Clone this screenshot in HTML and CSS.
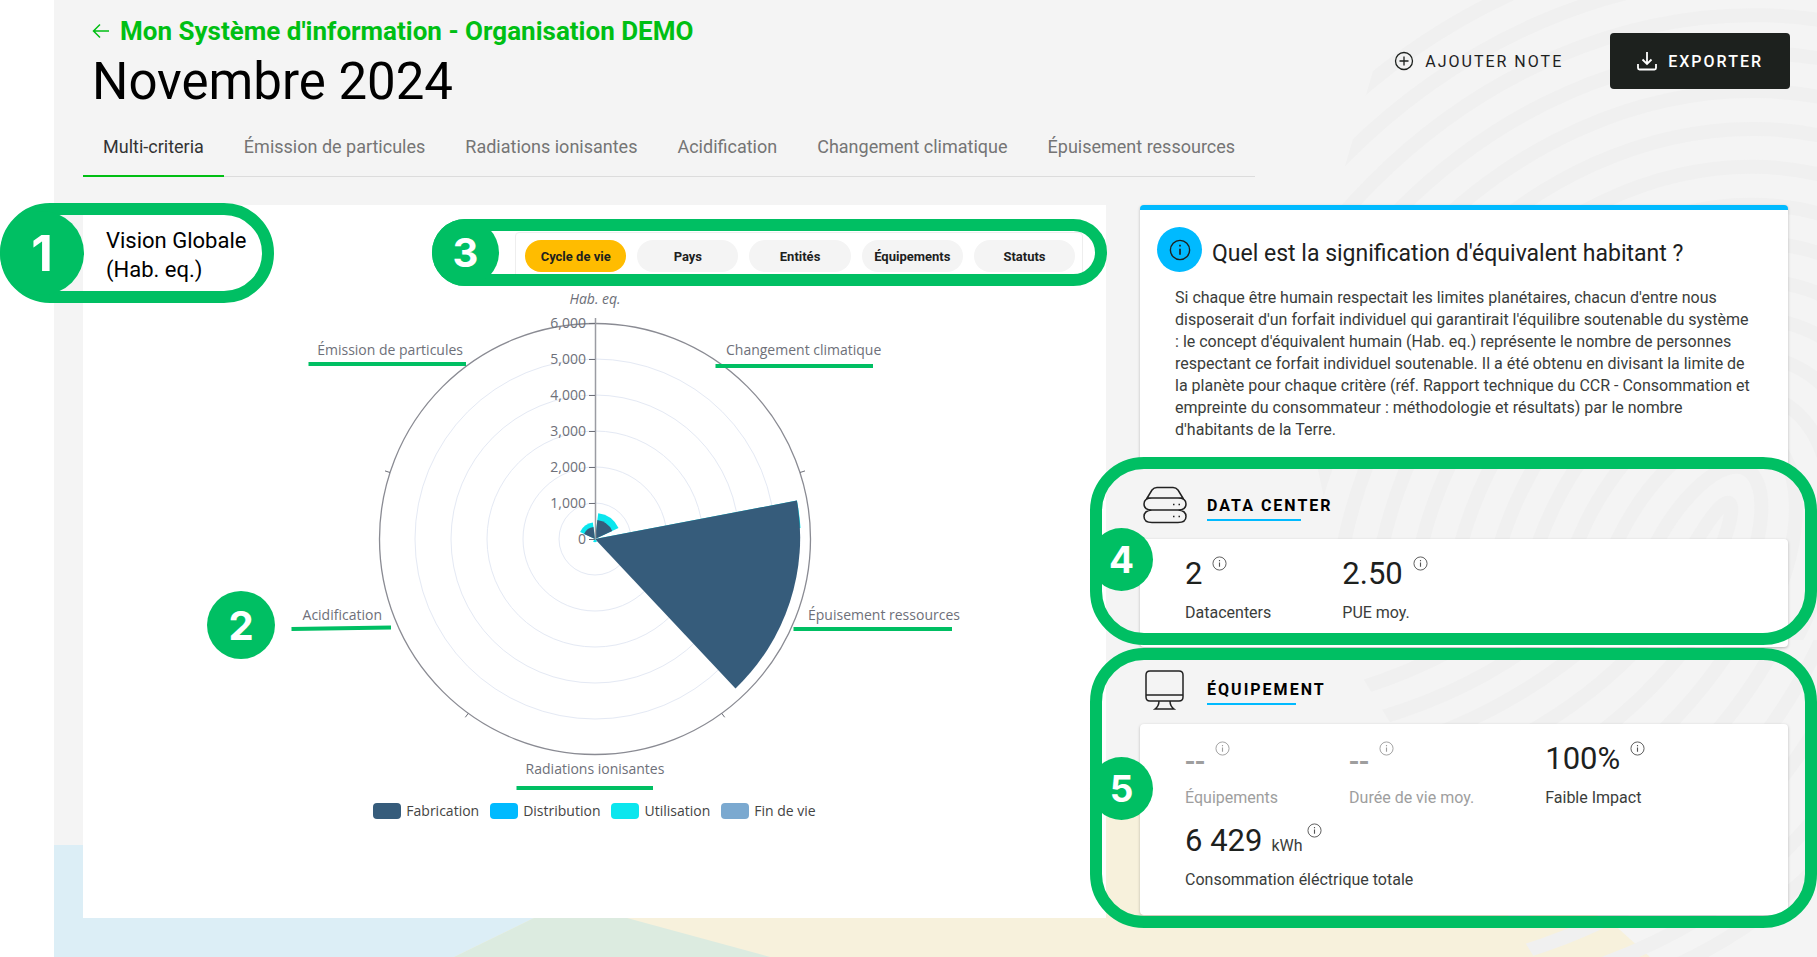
FILE: index.html
```html
<!DOCTYPE html>
<html lang="fr">
<head>
<meta charset="utf-8">
<title>Mon Système d'information - Novembre 2024</title>
<link rel="stylesheet" href="styles.css">
</head>
<body>
<svg class="defs" aria-hidden="true">
  <symbol id="info" viewBox="0 0 16 16"><circle cx="8" cy="8" r="7" fill="none" stroke="currentColor" stroke-width="1"/><path d="M8 7v4.500M8 4.200v1.300" stroke="currentColor" stroke-width="1.200" fill="none"/></symbol>
</svg>
<div class="app">
  <svg class="backdrop" viewBox="0 0 1763 957" preserveAspectRatio="xMaxYMin slice" aria-hidden="true">
    <defs>
      <clipPath id="print"><path d="M1340 0H1763V640H1300L1262 460L1281 200Z"/></clipPath>
      <clipPath id="print-low"><path d="M1300 640H1763V957H1480L1310 680Z"/></clipPath>
    </defs>
    <path d="M0 845H306L573 918L716 957H0Z" fill="#dceef6"/>
    <path d="M400 957L480 918L690 817L1100 806L1546 912L1596 957Z" fill="#f7f1dc"/>
    <path d="M400 957L480 918H573L716 957Z" fill="#dcebe0"/>
    <g clip-path="url(#print)"><g class="rings" transform="translate(1640 575) rotate(26)">
      <ellipse rx="14" ry="80"/><ellipse rx="48" ry="118"/><ellipse rx="84" ry="156"/><ellipse rx="120" ry="194"/><ellipse rx="156" ry="232"/><ellipse rx="192" ry="270"/><ellipse rx="230" ry="308"/><ellipse rx="268" ry="346"/><ellipse rx="306" ry="384"/><ellipse rx="344" ry="422"/><ellipse rx="382" ry="460"/><ellipse rx="420" ry="498"/><ellipse rx="458" ry="536"/><ellipse rx="496" ry="574"/><ellipse rx="534" ry="612"/><ellipse rx="572" ry="650"/>
    </g></g>
    <g clip-path="url(#print-low)"><path class="rings" d="M1300 690Q1400 660 1470 600M1300 725Q1440 690 1530 600M1320 755Q1480 710 1580 600M1340 785Q1520 740 1625 600M1360 820Q1560 770 1665 600M1380 855Q1600 800 1705 600M1400 890Q1640 830 1745 600M1420 925Q1680 860 1785 600M1440 960Q1710 890 1810 630M1480 985Q1740 920 1830 700M1560 990Q1740 930 1830 780"/></g>
  </svg>

  <header class="header">
    <div class="heading">
      <a class="back" href="#"><svg viewBox="0 0 18 16" aria-hidden="true"><path d="M17 8H1.500M8 1.500L1.500 8L8 14.500"/></svg><span>Mon Système d'information - Organisation DEMO</span></a>
      <h1>Novembre 2024</h1>
    </div>
    <div class="actions">
      <button class="btn"><svg viewBox="0 0 20 20" aria-hidden="true"><circle cx="10" cy="10" r="8.500"/><path d="M10 5.500v9M5.500 10h9"/></svg>AJOUTER NOTE</button>
      <button class="btn btn-dark"><svg viewBox="0 0 20 20" aria-hidden="true"><path d="M10 1v12M5.500 8.500L10 13l4.500-4.500M1 13v4q0 1.500 1.500 1.500h15q1.500 0 1.500-1.500v-4"/></svg>EXPORTER</button>
    </div>
  </header>

  <nav class="tabs">
    <a class="tab active" href="#">Multi-criteria</a>
    <a class="tab" href="#">Émission de particules</a>
    <a class="tab" href="#">Radiations ionisantes</a>
    <a class="tab" href="#">Acidification</a>
    <a class="tab" href="#">Changement climatique</a>
    <a class="tab" href="#">Épuisement ressources</a>
  </nav>

  <main class="content">
    <section class="chart-card">
      <div class="chart-top">
        <h2 class="chart-title">Vision Globale<br>(Hab. eq.)</h2>
        <div class="pills">
          <button class="pill selected">Cycle de vie</button>
          <button class="pill">Pays</button>
          <button class="pill">Entités</button>
          <button class="pill">Équipements</button>
          <button class="pill">Statuts</button>
        </div>
      </div>
      <svg class="chart" viewBox="0 0 740 522" role="img" aria-label="Impacts par critère">
        <g class="grid-rings"><circle cx="370" cy="258" r="36"/><circle cx="370" cy="258" r="72"/><circle cx="370" cy="258" r="108"/><circle cx="370" cy="258" r="144"/><circle cx="370" cy="258" r="180"/></g>
        <circle class="outer" cx="370" cy="258" r="215.500"/>
        <path class="axis" d="M575 191.500l5-1.600M496.700 432.300l3 4M243.300 432.300l-3 4M165 191.500l-5-1.600"/>
        <path fill="#0be6ee" d="M370 258L571.900 219.500A206 206 0 0 1 575.500 247Z"/>
        <path fill="#365c7b" d="M370 258L571.900 219.500A209 209 0 0 1 510.500 407.500Z"/>
        <path fill="#0be6ee" d="M370 258L373.200 232.200A26 26 0 0 1 393.500 246.900Z"/>
        <path fill="#365c7b" d="M370 258L372.400 239.100A19 19 0 0 1 387.200 249.900Z"/>
        <path fill="#0be6ee" d="M370 258L355.100 251A16.500 16.500 0 0 1 367.900 241.600Z"/>
        <path fill="#365c7b" d="M370 258L359.100 252.900A12 12 0 0 1 368.500 246.100Z"/>
        <path fill="#0be6ee" d="M370 258l2 2.500q-2 1.500-4 0Z"/>
        <path class="axis-main" d="M370.500 37V258"/>
        <path class="axis" d="M364 42.500h6M364 78.500h6M364 114.500h6M364 150.500h6M364 186.500h6M364 222.500h6M364 258.500h6"/>
        <g class="label end">
          <text x="361" y="47">6,000</text><text x="361" y="83">5,000</text><text x="361" y="119">4,000</text><text x="361" y="155">3,000</text><text x="361" y="191">2,000</text><text x="361" y="227">1,000</text><text x="361" y="263">0</text>
          <text x="238" y="74">Émission de particules</text>
          <text x="157" y="339">Acidification</text>
        </g>
        <g class="label mid"><text class="unit" x="370" y="23">Hab. eq.</text><text x="370" y="493">Radiations ionisantes</text></g>
        <g class="label"><text x="501" y="74">Changement climatique</text><text x="583" y="339">Épuisement ressources</text></g>
        <path class="marks" d="M83.500 83H241M490.500 85H648M568.500 348H727M66.500 348L166 346.500M291.500 507H428"/>
      </svg>
      <ul class="legend">
        <li><i class="sw c1"></i>Fabrication</li>
        <li><i class="sw c2"></i>Distribution</li>
        <li><i class="sw c3"></i>Utilisation</li>
        <li><i class="sw c4"></i>Fin de vie</li>
      </ul>
      <div class="frame frame-1"><b class="num">1</b></div>
      <div class="frame frame-3"><b class="num">3</b></div>
      <b class="num num-2">2</b>
    </section>

    <aside class="side">
      <section class="card explain">
        <div class="explain-head">
          <span class="badge"><svg><use href="#info"/></svg></span>
          <h2>Quel est la signification d'équivalent habitant ?</h2>
        </div>
        <p>Si chaque être humain respectait les limites planétaires, chacun d'entre nous<br>disposerait d'un forfait individuel qui garantirait l'équilibre soutenable du système<br>: le concept d'équivalent humain (Hab. eq.) représente le nombre de personnes<br>respectant ce forfait individuel soutenable. Il a été obtenu en divisant la limite de<br>la planète pour chaque critère (réf. Rapport technique du CCR - Consommation et<br>empreinte du consommateur : méthodologie et résultats) par le nombre<br>d'habitants de la Terre.</p>
      </section>

      <section class="group">
        <div class="group-head">
          <svg class="group-icon" viewBox="0 0 44 40" aria-hidden="true"><path d="M3.500 13L9 4Q11 1.500 14 1.500H30Q33 1.500 35 4L40.500 13M4 12H40M9 12H35Q43 12 43 18T35 24H9Q1 24 1 18T9 12ZM9 24H35Q43 24.500 43 30.500T35 36.500H9Q1 36.500 1 30.500T9 24Z"/><path class="dots" d="M30 18.500h1.500M35.500 18.500H37M30 30.500h1.500M35.500 30.500H37"/></svg>
          <h3>DATA CENTER</h3>
        </div>
        <div class="card metrics metrics-dc">
          <div class="metric"><div class="value">2<svg class="tip"><use href="#info"/></svg></div><div class="name">Datacenters</div></div>
          <div class="metric"><div class="value">2.50<svg class="tip"><use href="#info"/></svg></div><div class="name">PUE moy.</div></div>
        </div>
        <div class="frame frame-side"><b class="num num-mid">4</b></div>
      </section>

      <section class="group">
        <div class="group-head">
          <svg class="group-icon" viewBox="0 0 44 40" aria-hidden="true"><path d="M7 1H36Q40 1 40 5V27Q40 31 36 31H7Q3 31 3 27V5Q3 1 7 1ZM3 25H40M16 31Q16 36 12 39H31Q27 36 27 31"/></svg>
          <h3>ÉQUIPEMENT</h3>
        </div>
        <div class="card metrics metrics-eq">
          <div class="metric muted"><div class="value">--<svg class="tip"><use href="#info"/></svg></div><div class="name">Équipements</div></div>
          <div class="metric muted"><div class="value">--<svg class="tip"><use href="#info"/></svg></div><div class="name">Durée de vie moy.</div></div>
          <div class="metric"><div class="value">100%<svg class="tip"><use href="#info"/></svg></div><div class="name">Faible Impact</div></div>
          <div class="metric wide"><div class="value">6 429 <small>kWh</small><svg class="tip close"><use href="#info"/></svg></div><div class="name">Consommation éléctrique totale</div></div>
        </div>
        <div class="frame frame-side frame-5"><b class="num num-mid">5</b></div>
      </section>
    </aside>
  </main>
</div>
</body>
</html>
```
FILE: styles.css
```css
* { box-sizing: border-box; }
html { background: #fff; }
body { margin: 0; font-family: Roboto, "Open Sans", sans-serif; color: #1d211e; }
h1, h2, h3, p, ul { margin: 0; padding: 0; font-weight: 400; }
a { text-decoration: none; color: inherit; }
button { font-family: inherit; border: 0; color: inherit; cursor: pointer; }
.defs { position: absolute; width: 0; height: 0; }

.app { position: relative; margin-left: 54px; min-height: 957px; padding: 0 29px; background: #f4f4f4; }
.backdrop { position: absolute; inset: 0; width: 100%; height: 100%; }
.rings { fill: none; stroke: #f0f0f0; stroke-width: 14; }

.header { position: relative; display: flex; justify-content: space-between; padding-top: 14px; height: 127px; }
.heading { padding-left: 9px; }
.back { display: flex; align-items: center; gap: 10px; color: #00bf13; font-size: 26px; line-height: 34px; font-weight: 700; }
.back svg { width: 18px; height: 16px; fill: none; stroke: currentColor; stroke-width: 1.500; }
h1 { font-size: 51px; line-height: 68px; color: #000; }
.actions { display: flex; align-items: flex-start; gap: 20px; margin-right: -2px; padding-top: 19px; }
.btn { display: flex; align-items: center; gap: 11px; height: 56px; padding: 0 27px; background: none; font-size: 16px; letter-spacing: 2px; border-radius: 4px; }
.btn svg { width: 20px; height: 20px; fill: none; stroke: currentColor; stroke-width: 1.300; }
.btn-dark { background: #1d211e; color: #fff; font-weight: 500; }
.btn-dark svg { stroke-width: 1.800; }

.tabs { position: relative; display: flex; width: fit-content; border-bottom: 1px solid #dcdcdc; }
.tab { padding: 0 20px; height: 49px; line-height: 40px; font-size: 18px; color: #757575; }
.tab.active { color: #333; border-bottom: 2px solid #00bf13; margin-bottom: -1px; height: 50px; }

.content { position: relative; display: grid; grid-template-columns: 60fr 38fr; gap: 34px; align-items: start; padding-top: 28px; }
.chart-card { position: relative; min-height: 713px; padding: 21px 23px 20px; background: #fff; }
.chart-top { display: flex; justify-content: space-between; }
.chart-title { font-size: 22px; line-height: 29px; color: #000; }
.pills { display: flex; gap: 11px; width: 568px; height: 50px; margin-top: 6px; padding: 7px 7px 9px 9px; border: 1px solid #eee; border-radius: 4px; }
.pill { flex: 1; height: 32px; padding: 0; border-radius: 16px; background: #f4f4f4; font-size: 13px; font-weight: 700; }
.pill.selected { background: #ffbc00; }
.chart { display: block; width: 740px; margin: -3px auto 0; font-family: "Open Sans", "Noto Sans", sans-serif; }
.grid-rings { fill: none; stroke: #e4e9f4; stroke-width: 1; }
.outer { fill: none; stroke: #8a8b93; stroke-width: 1.300; }
.axis { fill: none; stroke: #6e7079; }
.axis-main { stroke: #9b9ca3; stroke-width: 1.500; }
.label { font-size: 14px; fill: #6e7079; }
.end { text-anchor: end; }
.mid { text-anchor: middle; }
.unit { font-style: italic; }
.marks { fill: none; stroke: #00bf63; stroke-width: 4; }
.legend { display: flex; justify-content: center; gap: 11px; list-style: none; font: 14px/16px "Open Sans", "Noto Sans", sans-serif; color: #444; }
.legend li { display: flex; align-items: center; gap: 5px; }
.sw { width: 28px; height: 16px; border-radius: 4px; }
.c1 { background: #365c7b; }
.c2 { background: #00baff; }
.c3 { background: #0be6ee; }
.c4 { background: #7ba9d0; }

.card { background: #fff; border-radius: 4px; box-shadow: 0 1px 3px rgba(0, 0, 0, 0.25); }
.explain { border-top: 5px solid #00baff; padding: 17px 17px 30px; height: 260px; }
.explain-head { display: flex; align-items: center; gap: 10px; height: 45px; }
.badge { display: grid; place-items: center; width: 45px; height: 45px; border-radius: 50%; background: #00baff; }
.badge svg { width: 22px; height: 22px; }
.explain h2 { padding-top: 8px; font-size: 23px; line-height: 40px; white-space: nowrap; }
.explain p { padding: 15px 0 0 18px; font-size: 16px; line-height: 22px; white-space: nowrap; color: #3a3d3b; }

.group { position: relative; }
.group-head { display: flex; align-items: flex-start; gap: 20px; padding: 21px 0 0 3px; height: 74px; }
.group + .group .group-head { padding-top: 23px; height: 77px; }
.group-icon { width: 44px; height: 40px; fill: none; stroke: #222; stroke-width: 1.500; }
h3 { position: relative; padding-top: 5px; font-size: 16px; line-height: 30px; font-weight: 700; letter-spacing: 2px; color: #000; }
h3::after { content: ""; position: absolute; left: 0; bottom: 0; width: 75%; height: 2px; background: #00baff; }
.metrics { display: flex; flex-wrap: wrap; column-gap: 71px; padding: 15px 45px 12px; }
.metrics-dc { height: 108px; }
.metrics-eq { min-height: 191px; }
.metric { height: 82px; }
.wide { width: 100%; }
.value { display: flex; align-items: baseline; height: 40px; font-size: 31px; line-height: 40px; }
.value small { margin-left: 9px; font-size: 16px; line-height: 20px; color: #3a3d3b; }
.tip { align-self: flex-start; width: 15px; height: 15px; margin: 2px 0 0 10px; color: #555; }
.tip.close { margin-left: 4px; }
.name { margin-top: 7px; font-size: 16px; line-height: 24px; color: #3a3d3b; white-space: nowrap; }
.muted .value, .muted .name, .muted .tip { color: #9e9e9e; }
.muted .value { font-family: "Open Sans", sans-serif; font-weight: 600; }

.frame { position: absolute; border: 12px solid #00bf63; pointer-events: none; }
.num { display: grid; place-items: center; position: absolute; border-radius: 50%; background: #00bf63; color: #fff; font-family: Inter, sans-serif; font-weight: 700; }
.frame-1 { left: -83px; top: -2px; width: 274px; height: 100px; border-radius: 50px; }
.frame-1 .num { left: -12px; top: -4px; width: 84px; height: 84px; font-size: 50px; }
.frame-3 { left: 349px; right: -1px; top: 14px; height: 67px; border-radius: 34px; }
.frame-3 .num { left: -12px; top: -12px; width: 67px; height: 67px; font-size: 40px; }
.num-2 { left: 124px; top: 386px; width: 68px; height: 68px; font-size: 40px; }
.frame-side { left: -50px; right: -29px; top: -8px; height: 188px; border-radius: 54px; }
.frame-5 { top: 1px; height: 280px; }
.num-mid { left: -12px; top: 59px; width: 63px; height: 63px; font-size: 37px; }
.frame-5 .num-mid { top: 97px; }
```
